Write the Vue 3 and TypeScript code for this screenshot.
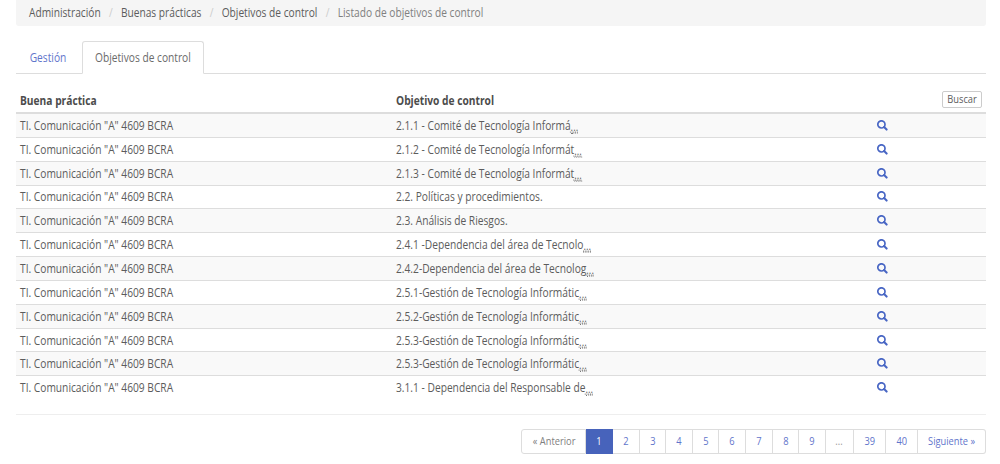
<script setup lang="ts">
interface Objective {
  title: string
  truncated: boolean
}

const practice = 'TI. Comunicación "A" 4609 BCRA'

const crumbs: string[] = ['Administración', 'Buenas prácticas', 'Objetivos de control']

const objectives: Objective[] = [
  { title: '2.1.1 - Comité de Tecnología Informá', truncated: true },
  { title: '2.1.2 - Comité de Tecnología Informát', truncated: true },
  { title: '2.1.3 - Comité de Tecnología Informát', truncated: true },
  { title: '2.2. Políticas y procedimientos.', truncated: false },
  { title: '2.3. Análisis de Riesgos.', truncated: false },
  { title: '2.4.1 -Dependencia del área de Tecnolo', truncated: true },
  { title: '2.4.2-Dependencia del área de Tecnolog', truncated: true },
  { title: '2.5.1-Gestión de Tecnología Informátic', truncated: true },
  { title: '2.5.2-Gestión de Tecnología Informátic', truncated: true },
  { title: '2.5.3-Gestión de Tecnología Informátic', truncated: true },
  { title: '2.5.3-Gestión de Tecnología Informátic', truncated: true },
  { title: '3.1.1 - Dependencia del Responsable de', truncated: true },
]

const pages: string[] = ['2', '3', '4', '5', '6', '7', '8', '9']
</script>

<template>
  <main class="page">
    <nav class="breadcrumb">
      <div class="trail">
        <template v-for="crumb in crumbs" :key="crumb">
          <a class="crumb">{{ crumb }}</a>
          <span class="slash">/</span>
        </template>
        <span class="current">Listado de objetivos de control</span>
      </div>
    </nav>

    <div class="tabs">
      <a class="tab"><span class="label">Gestión</span></a>
      <a class="tab active"><span class="label">Objetivos de control</span></a>
    </div>

    <div class="table">
      <div class="row head">
        <span class="cell">Buena práctica</span>
        <span class="cell">Objetivo de control</span>
        <button class="search" type="button"><span class="small">Buscar</span></button>
      </div>
      <div v-for="(item, i) in objectives" :key="i" class="row item">
        <span class="cell">{{ practice }}</span>
        <span class="cell">{{ item.title }}<abbr v-if="item.truncated" class="more">...</abbr></span>
        <a class="view">
          <svg viewBox="0 0 11 11" width="11" height="11">
            <circle cx="4.4" cy="4.4" r="3.6" fill="none" stroke="currentColor" stroke-width="1.7" />
            <path d="M7.1 7.1 L9.6 9.6" stroke="currentColor" stroke-width="2.1" stroke-linecap="round" />
          </svg>
        </a>
      </div>
    </div>

    <div class="rule"></div>

    <div class="pager">
      <span class="pg prev"><span class="small">« Anterior</span></span>
      <span class="pg on"><span class="small">1</span></span>
      <a v-for="p in pages" :key="p" class="pg"><span class="small">{{ p }}</span></a>
      <span class="pg gap"><span class="small">...</span></span>
      <a class="pg wide"><span class="small">39</span></a>
      <a class="pg wide"><span class="small">40</span></a>
      <a class="pg next"><span class="small">Siguiente »</span></a>
    </div>
  </main>
</template>

<style>
body {
  background: #fff;
}
</style>

<style scoped>
.page {
  box-sizing: border-box;
  width: 1000px;
  height: 464px;
  padding: 0 13.6px 0 16px;
  overflow: hidden;
  font-family: "Open Sans", "Noto Sans", sans-serif;
  font-size: 11.7px;
  line-height: 17px;
  color: #5c5c5c;
}

.breadcrumb {
  box-sizing: border-box;
  height: 26px;
  padding: 4px 12.5px;
  background: #f5f5f5;
  border-radius: 0 0 3px 3px;
}

.trail {
  display: flex;
  transform: translateY(-0.5px) scaleX(0.872);
  transform-origin: left;
}

.slash {
  width: 23.2px;
  text-align: center;
  color: #ccc;
}

.current {
  color: #808080;
}

.tabs {
  display: flex;
  box-sizing: border-box;
  height: 33px;
  margin-top: 15px;
  border-bottom: 1px solid #ddd;
}

.tab {
  display: flex;
  justify-content: center;
  box-sizing: border-box;
  width: 64px;
  height: 33px;
  padding-top: 7px;
  border: 1px solid transparent;
  white-space: nowrap;
  color: #5f75cb;
}

.label {
  transform: translateY(-0.5px) scaleX(0.872);
}

.tab.active {
  width: 122px;
  margin-left: 2px;
  color: #6a6a6a;
  background: #fff;
  border-color: #ddd #ddd #fff;
  border-radius: 3px 3px 0 0;
}

.table {
  margin-top: 13px;
}

.row {
  display: grid;
  box-sizing: border-box;
  grid-template-columns: 376px 480.5px 1fr;
  align-items: center;
  padding: 0 4px;
}

.cell {
  transform: translateY(-0.4px) scaleX(0.874);
  transform-origin: left;
}

.head {
  height: 27px;
  padding-top: 2px;
  border-bottom: 2px solid #ddd;
  font-weight: 700;
  color: #4c4c4c;
}

.search {
  display: flex;
  justify-content: center;
  box-sizing: border-box;
  justify-self: end;
  width: 40px;
  height: 17px;
  margin-top: -2px;
  padding: 0;
  border: 1px solid #ccc;
  border-radius: 2px;
  background: #fff;
  font: 10.1px/15px "Open Sans", sans-serif;
  color: #5c5c5c;
}

.small {
  display: inline-block;
  transform: scaleX(0.92);
}

.item {
  height: 23.85px;
  border-bottom: 1px solid #ddd;
}

.item:nth-child(even) {
  background: #f9f9f9;
}

.item:last-child {
  border-bottom-color: transparent;
}

.more {
  display: inline-block;
  position: relative;
  top: 1px;
  height: 13px;
  margin: -4px 0;
  font-size: 11px;
  line-height: 13px;
  text-decoration: underline dotted 1px;
  text-underline-offset: 1px;
  border-bottom: 1px dotted #777;
}

.view {
  display: flex;
  color: #4866c4;
}

.rule {
  height: 1px;
  margin-top: 14px;
  background: #eee;
}

.pager {
  display: flex;
  justify-content: flex-end;
  margin-top: 14px;
  font-size: 10.1px;
  line-height: 23px;
  text-align: center;
}

.pg {
  box-sizing: border-box;
  width: 26.6px;
  height: 25px;
  border: 1px solid #ddd;
  border-left: 0;
  color: #5f75cb;
}

.prev {
  width: 65px;
  border-left: 1px solid #ddd;
  border-radius: 3px 0 0 3px;
  color: #808080;
}

.on {
  background: #4763bb;
  border-color: #4763bb;
  color: #fff;
}

.gap {
  width: 28px;
  color: #999;
}

.wide {
  width: 32px;
}

.next {
  width: 68.6px;
  border-radius: 0 3px 3px 0;
}
</style>
